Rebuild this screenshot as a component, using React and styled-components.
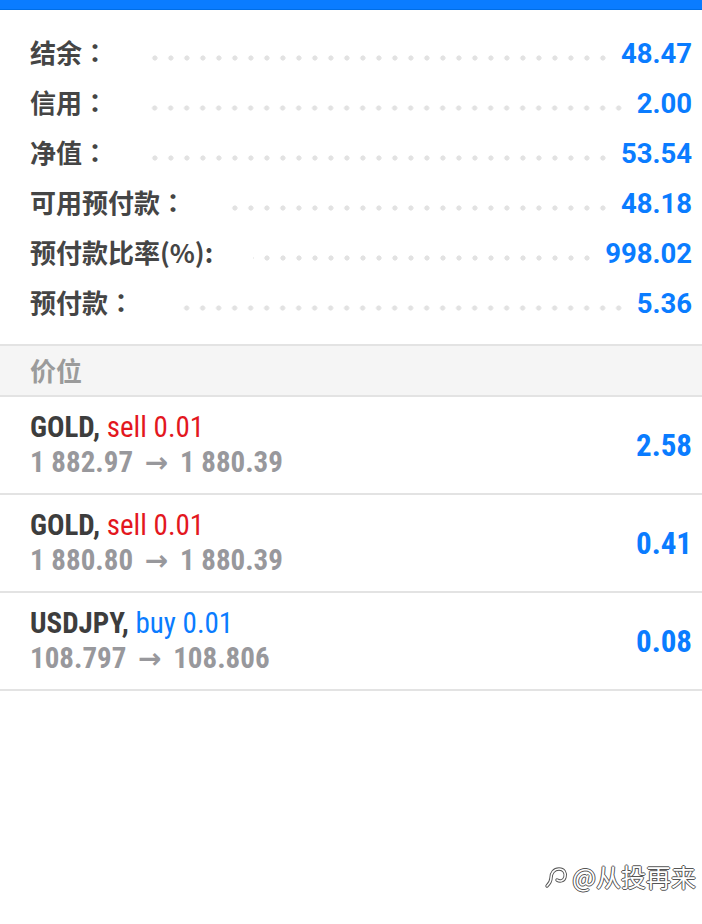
import React from "react";
import styled, { createGlobalStyle } from "styled-components";

const Global = createGlobalStyle`
  html, body { margin: 0; padding: 0; background: #ffffff; }
  body { font-family: "Roboto", "Noto Sans CJK SC", sans-serif; }
`;

const Page = styled.div`
  position: relative;
  width: 702px;
  min-height: 924px;
  background: #fff;
`;

const TopBar = styled.div`
  height: 9px;
  background: #0a7cff;
  border-bottom: 1px solid #006ee6;
`;

const Summary = styled.div`
  display: flex;
  flex-direction: column;
  padding: 17px 10px 17px 30px;
`;

const SummaryRow = styled.div`
  display: flex;
  align-items: baseline;
  height: 50px;
  line-height: 50px;
`;

const Label = styled.span`
  font-family: "Noto Sans CJK SC", "Noto Sans", sans-serif;
  font-weight: 700;
  font-size: 26px;
  color: #454545;
  white-space: nowrap;
`;

const Colon = styled.span`
  font-family: "Noto Sans CJK TC", "Noto Sans CJK SC", sans-serif;
`;

const DotFill = styled.span`
  flex: 1;
  align-self: center;
  height: 6px;
  margin: 12px 10px 0 40px;
  background-image: radial-gradient(circle, #e2e2e2 2.3px, rgba(226, 226, 226, 0) 2.9px);
  background-size: 16px 6px;
  background-position: right center;
  background-repeat: repeat-x;
`;

const Amount = styled.span`
  font-family: "Roboto", "Liberation Sans", sans-serif;
  font-weight: 700;
  font-size: 27.5px;
  color: #0a7cff;
  white-space: nowrap;
`;

const SectionHeader = styled.div`
  display: flex;
  align-items: center;
  height: 47px;
  padding: 0 0 2px 30px;
  background: #f5f5f5;
  border-top: 2px solid #e3e3e3;
  border-bottom: 2px solid #e3e3e3;
  font-family: "Noto Sans CJK SC", "Noto Sans", sans-serif;
  font-weight: 700;
  font-size: 26px;
  color: #9b9b9b;
`;

const Position = styled.div`
  display: flex;
  align-items: center;
  justify-content: space-between;
  height: 96px;
  padding: 0 10px 0 30px;
  border-bottom: 2px solid #e3e3e3;
  font-family: "Roboto Condensed", "Roboto", sans-serif;
  font-stretch: condensed;
`;

const PosInfo = styled.div`
  display: flex;
  flex-direction: column;
`;

const Line = styled.div`
  font-size: 29px;
  line-height: 35px;
  white-space: nowrap;
`;

const Symbol = styled.span`
  font-weight: 700;
  color: #3d3d3d;
`;

const Side = styled.span`
  font-weight: 400;
  color: ${(p) => (p.$type === "sell" ? "#e3171e" : "#0a7cff")};
`;

const Prices = styled(Line)`
  font-weight: 700;
  color: #98989c;
`;

const Arrow = styled.span`
  display: inline-block;
  margin: 0 5px;
  font-family: "DejaVu Sans", sans-serif;
  font-weight: 700;
  font-size: 28px;
  font-stretch: normal;
`;

const Profit = styled.span`
  font-weight: 700;
  font-size: 31px;
  color: #0a7cff;
`;

const Watermark = styled.div`
  position: absolute;
  right: 6px;
  bottom: 30px;
  display: flex;
  align-items: center;
  gap: 2px;
  font-family: "Noto Sans CJK SC", "Noto Sans", sans-serif;
  font-size: 25px;
  color: #fff;
  text-shadow: -1px 0 #555, 1px 0 #555, 0 -1px #555, 0 1px #555;
`;

const summary = [
  ["结余", "：", "48.47"],
  ["信用", "：", "2.00"],
  ["净值", "：", "53.54"],
  ["可用预付款", "：", "48.18"],
  ["预付款比率(%):", "", "998.02"],
  ["预付款", "：", "5.36"],
];

const positions = [
  { sym: "GOLD", side: "sell", vol: "0.01", open: "1 882.97", cur: "1 880.39", profit: "2.58" },
  { sym: "GOLD", side: "sell", vol: "0.01", open: "1 880.80", cur: "1 880.39", profit: "0.41" },
  { sym: "USDJPY", side: "buy", vol: "0.01", open: "108.797", cur: "108.806", profit: "0.08" },
];

const WeiboMark = () => (
  <svg width="26" height="26" viewBox="0 0 26 26" fill="none" strokeLinecap="round">
    <g stroke="#555" strokeWidth="3.4">
      <path d="M3 23 C5 21 7 19 7 15 C7 10 10 6 15 6 C20 6 22 10 21 14 C20 18 16 19 13 17" />
    </g>
    <g stroke="#fff" strokeWidth="1.6">
      <path d="M3 23 C5 21 7 19 7 15 C7 10 10 6 15 6 C20 6 22 10 21 14 C20 18 16 19 13 17" />
    </g>
  </svg>
);

export default function App() {
  return (
    <Page>
      <Global />
      <TopBar />
      <Summary>
        {summary.map(([l, c, v]) => (
          <SummaryRow key={l}>
            <Label>
              {l}
              {c && <Colon>{c}</Colon>}
            </Label>
            <DotFill />
            <Amount>{v}</Amount>
          </SummaryRow>
        ))}
      </Summary>
      <SectionHeader>价位</SectionHeader>
      {positions.map((p, i) => (
        <Position key={i}>
          <PosInfo>
            <Line>
              <Symbol>{p.sym},</Symbol> <Side $type={p.side}>{p.side} {p.vol}</Side>
            </Line>
            <Prices>
              {p.open} <Arrow>→</Arrow> {p.cur}
            </Prices>
          </PosInfo>
          <Profit>{p.profit}</Profit>
        </Position>
      ))}
      <Watermark>
        <WeiboMark />
        <span>@从投再来</span>
      </Watermark>
    </Page>
  );
}
